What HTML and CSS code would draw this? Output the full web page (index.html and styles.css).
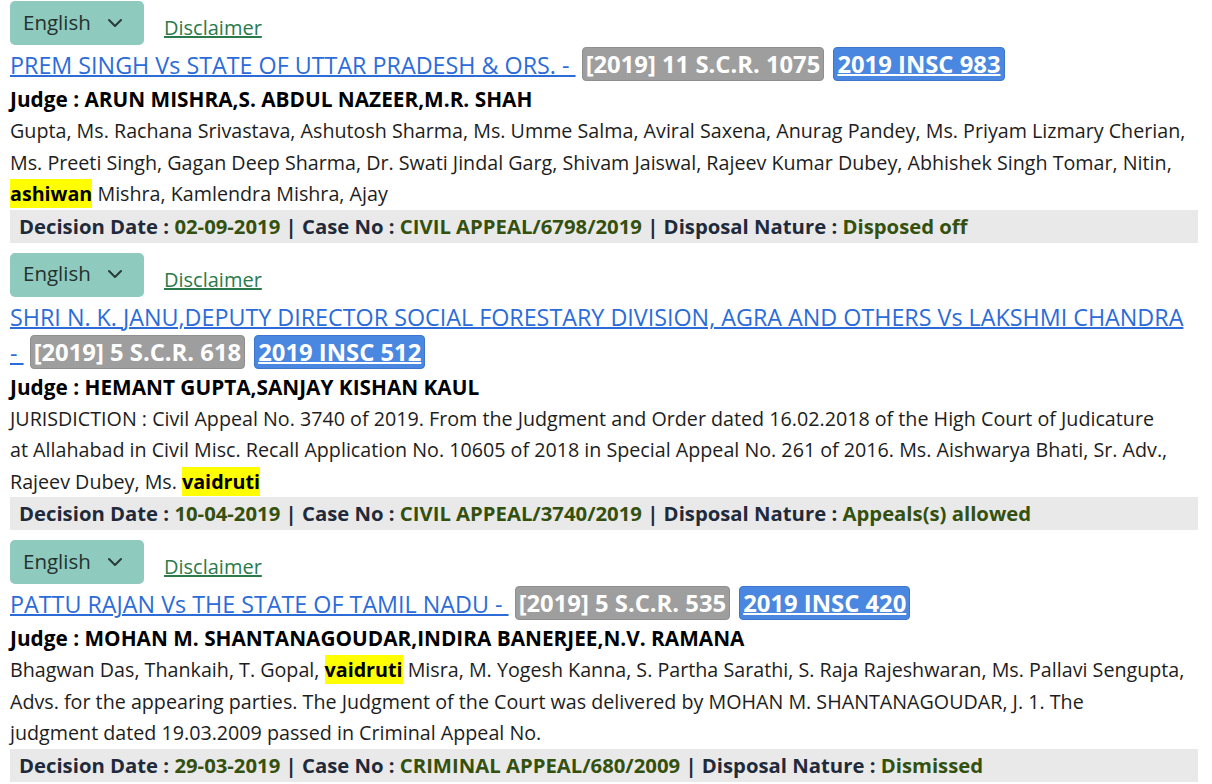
FILE: index.html
```html
<!DOCTYPE html>
<html>
<head>
<meta charset="utf-8">
<link rel="stylesheet" href="styles.css">
</head>
<body>
<div class="results">

  <div class="result">
    <div class="tools">
      <button class="lang">English <svg class="chev" width="16" height="10" viewBox="0 0 16 10"><path d="M2 2 L8 8 L14 2" fill="none" stroke="#2a3a36" stroke-width="2" stroke-linecap="round" stroke-linejoin="round"/></svg></button>
      <a class="disclaimer" href="#">Disclaimer</a>
    </div>
    <div class="title"><a class="case" href="#">PREM SINGH Vs STATE OF UTTAR PRADESH &amp; ORS. <span class="nowrap">-&nbsp;</span></a> <span class="badge scr">[2019] 11 S.C.R. 1075</span> <a class="badge insc" href="#">2019 INSC 983</a></div>
    <div class="judge">Judge : ARUN MISHRA,S. ABDUL NAZEER,M.R. SHAH</div>
    <p class="snippet">Gupta, Ms. Rachana Srivastava, Ashutosh Sharma, Ms. Umme Salma, Aviral Saxena, Anurag Pandey, Ms. Priyam Lizmary Cherian,<br>Ms. Preeti Singh, Gagan Deep Sharma, Dr. Swati Jindal Garg, Shivam Jaiswal, Rajeev Kumar Dubey, Abhishek Singh Tomar, Nitin,<br><mark>ashiwan</mark> Mishra, Kamlendra Mishra, Ajay</p>
    <div class="meta">Decision Date : <span class="val">02-09-2019</span> | Case No : <span class="val">CIVIL APPEAL/6798/2019</span> | Disposal Nature : <span class="val">Disposed off</span></div>
  </div>

  <div class="result">
    <div class="tools">
      <button class="lang">English <svg class="chev" width="16" height="10" viewBox="0 0 16 10"><path d="M2 2 L8 8 L14 2" fill="none" stroke="#2a3a36" stroke-width="2" stroke-linecap="round" stroke-linejoin="round"/></svg></button>
      <a class="disclaimer" href="#">Disclaimer</a>
    </div>
    <div class="title"><a class="case" href="#">SHRI N. K. JANU,DEPUTY DIRECTOR SOCIAL FORESTARY DIVISION, AGRA AND OTHERS Vs LAKSHMI CHANDRA <span class="nowrap">-&nbsp;</span></a> <span class="badge scr">[2019] 5 S.C.R. 618</span> <a class="badge insc" href="#">2019 INSC 512</a></div>
    <div class="judge">Judge : HEMANT GUPTA,SANJAY KISHAN KAUL</div>
    <p class="snippet">JURISDICTION : Civil Appeal No. 3740 of 2019. From the Judgment and Order dated 16.02.2018 of the High Court of Judicature<br>at Allahabad in Civil Misc. Recall Application No. 10605 of 2018 in Special Appeal No. 261 of 2016. Ms. Aishwarya Bhati, Sr. Adv.,<br>Rajeev Dubey, Ms. <mark>vaidruti</mark></p>
    <div class="meta">Decision Date : <span class="val">10-04-2019</span> | Case No : <span class="val">CIVIL APPEAL/3740/2019</span> | Disposal Nature : <span class="val">Appeals(s) allowed</span></div>
  </div>

  <div class="result">
    <div class="tools">
      <button class="lang">English <svg class="chev" width="16" height="10" viewBox="0 0 16 10"><path d="M2 2 L8 8 L14 2" fill="none" stroke="#2a3a36" stroke-width="2" stroke-linecap="round" stroke-linejoin="round"/></svg></button>
      <a class="disclaimer" href="#">Disclaimer</a>
    </div>
    <div class="title"><a class="case" href="#">PATTU RAJAN Vs THE STATE OF TAMIL NADU <span class="nowrap">-&nbsp;</span></a> <span class="badge scr">[2019] 5 S.C.R. 535</span> <a class="badge insc" href="#">2019 INSC 420</a></div>
    <div class="judge">Judge : MOHAN M. SHANTANAGOUDAR,INDIRA BANERJEE,N.V. RAMANA</div>
    <p class="snippet">Bhagwan Das, Thankaih, T. Gopal, <mark>vaidruti</mark> Misra, M. Yogesh Kanna, S. Partha Sarathi, S. Raja Rajeshwaran, Ms. Pallavi Sengupta,<br>Advs. for the appearing parties. The Judgment of the Court was delivered by MOHAN M. SHANTANAGOUDAR, J. 1. The<br>judgment dated 19.03.2009 passed in Criminal Appeal No.</p>
    <div class="meta">Decision Date : <span class="val">29-03-2019</span> | Case No : <span class="val">CRIMINAL APPEAL/680/2009</span> | Disposal Nature : <span class="val">Dismissed</span></div>
  </div>

</div>
</body>
</html>
```

FILE: styles.css
```css
html, body {
  margin: 0;
  padding: 0;
  background: #ffffff;
}
body {
  font-family: "Open Sans", "Noto Sans", sans-serif;
  color: #212529;
}
.results {
  padding: 1px 14px 0 10px;
}
.result {
  margin-bottom: 10px;
}
.tools {
  display: flex;
  align-items: flex-end;
  gap: 20px;
  height: 44px;
}
.lang {
  display: flex;
  align-items: center;
  gap: 16px;
  height: 44px;
  width: 134px;
  padding: 0 0 3px 13px;
  border: none;
  border-radius: 5px;
  background: #8ecabd;
  color: #25302d;
  font-family: inherit;
  font-size: 20.5px;
}
.chev {
  margin-top: 2px;
}
.disclaimer {
  color: #2a7a4b;
  font-size: 20px;
  line-height: 28px;
  margin-bottom: 3px;
  text-decoration-thickness: 2px;
}
.title {
  font-size: 23.3px;
  line-height: 36px;
  margin-top: 2px;
}
.case {
  color: #2c6cd8;
  text-decoration-thickness: 2px;
}
.nowrap {
  white-space: nowrap;
}
.badge {
  display: inline-block;
  height: 34px;
  line-height: 32px;
  padding: 0 3px;
  margin-top: -1px;
  border-radius: 4px;
  font-size: 23.8px;
  font-weight: 700;
  color: #ffffff;
  vertical-align: 1px;
  box-sizing: border-box;
}
.scr {
  background: #9e9e9e;
  border: 1px solid #8f8f8f;
}
.insc {
  margin-left: 3px;
  background: #4a87e0;
  border: 1px solid #3d76cc;
  text-decoration-thickness: 2px;
}
.judge {
  font-size: 20.8px;
  font-weight: 700;
  color: #000000;
  line-height: 32px;
}
.snippet {
  margin: 0;
  font-size: 19.7px;
  line-height: 31.5px;
  color: #1d1d1d;
}
mark {
  background: #ffff00;
  color: #000000;
  font-weight: 700;
  padding: 1px 0;
}
.meta {
  background: #e9e9e9;
  height: 33px;
  line-height: 33px;
  padding-left: 9px;
  font-size: 20.3px;
  font-weight: 700;
  color: #1f2a3a;
}
.val {
  color: #34500f;
}
```
